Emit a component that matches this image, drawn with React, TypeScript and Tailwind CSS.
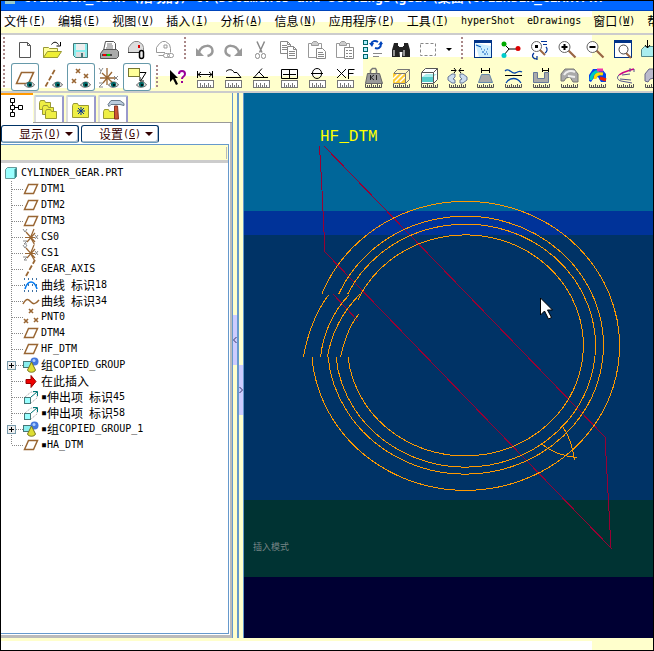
import type { ReactNode } from 'react';

const MONO = "font-['DejaVu_Sans_Mono','Liberation_Mono',monospace]";
const CJK = "font-['Noto_Sans_CJK_SC',sans-serif]";

/** Sets Chinese runs at 12px and half-width Latin runs at 10px (6px advance). */
function Mixed({ text }: { text: string }) {
  return (
    <span className={`inline-flex items-center whitespace-pre text-[10px] leading-4 ${MONO}`}>
      {text.split(/([\u4e00-\u9fff]+)/).map((run, i) =>
        i % 2 ? (
          <span key={i} className={`text-[12px] leading-4 ${CJK}`}>{run}</span>
        ) : (
          <span key={i}>{run}</span>
        ),
      )}
    </span>
  );
}

function KeyLabel({ text, hot }: { text: string; hot?: string }) {
  return (
    <span className="inline-flex items-center">
      <Mixed text={text} />
      {hot && (
        <span className={`text-[10px] leading-4 ${MONO}`}>
          (<u>{hot}</u>)
        </span>
      )}
    </span>
  );
}

/* ---------- toolbar drawings, each on a 28 x 28 field ---------- */

const Ruler = () => (
  <g stroke="#777" fill="#fff" strokeWidth="1">
    <rect x="6.5" y="17.5" width="16" height="7" />
    <path d="M9.5 20v4M11.5 22v2M13.5 20v4M15.5 22v2M17.5 20v4M19.5 22v2" />
  </g>
);
const Ticks = () => (
  <path d="M6.5 21v3.5h16V21M8.5 22v2M10.5 22v2M12.5 21v3M14.5 22v2M16.5 22v2M18.5 21v3M20.5 22v2" stroke="#555" strokeWidth="1" fill="none" />
);
const Eye = () => (
  <g>
    <path d="M13.500 22c3-4 8-4 10 0c-3 3-8 3-10 0z" fill="#ddd" stroke="#666" />
    <rect x="16" y="19" width="5" height="5" rx="2" fill="#006666" />
    <rect x="18" y="21" width="2" height="2" fill="#001818" />
  </g>
);
const Cross = ({ x, y, r = 2 }: { x: number; y: number; r?: number }) => (
  <path d={`M${x - r} ${y - r}l${2 * r} ${2 * r}M${x + r} ${y - r}l${-2 * r} ${2 * r}`} stroke="#996633" strokeWidth="1.6" fill="none" />
);
const Lens = ({ sign }: { sign?: string }) => (
  <g fill="none">
    <path d="M15.500 15.500l7 7" stroke="#996644" strokeWidth="2.200" />
    <circle cx="11.500" cy="12" r="5.500" fill="#fff" stroke="#666" />
    {sign && <path d={sign} stroke="#000" strokeWidth="2" />}
  </g>
);

type Tool = { name: string; art: ReactNode; on?: boolean };

const fileTools: Tool[] = [
  { name: 'New', art: <path d="M8.500 7.500h8l3 3v12h-11zM16.500 7.500v3h3" fill="#fff" stroke="#555" /> },
  {
    name: 'Open',
    art: (
      <g>
        <path d="M4.500 12.500h5l1 1h8v9h-14z" fill="#ffff99" stroke="#999933" />
        <path d="M4.500 22.500l4-6h14l-4 6z" fill="#eeee33" stroke="#999933" />
        <path d="M12.500 9.500c2-3 5-3 7 0M21.500 7v4h-4" fill="none" stroke="#000" />
      </g>
    ),
  },
  {
    name: 'Save',
    art: (
      <g>
        <path d="M6.500 8.500h14v14h-12l-2-2z" fill="#88eeee" stroke="#447777" />
        <rect x="9" y="9" width="9" height="6" fill="#eee" />
        <rect x="9" y="17" width="9" height="5" fill="#ddd" />
        <rect x="14" y="18" width="2" height="4" fill="#447777" />
      </g>
    ),
  },
  {
    name: 'Print',
    art: (
      <g>
        <path d="M8.500 15.500l2-9h8l2 2v7z" fill="#fff" stroke="#555" />
        <path d="M12 9h5M12 11h6M11 13h7" stroke="#777" />
        <path d="M5.500 18.500l3-4h13l2 2v5l-2 2h-16z" fill="#aaa" stroke="#555" />
        <rect x="7" y="19" width="10" height="2" fill="#444" />
        <rect x="8" y="19" width="3" height="2" fill="#e00" />
        <rect x="12" y="19" width="3" height="2" fill="#0c0" />
      </g>
    ),
  },
  {
    name: 'Send mail',
    art: (
      <g>
        <path d="M5.500 17.500v-5l3-4 3-2h4l4 3 1 3v5z" fill="#ddd" stroke="#888" />
        <path d="M5 17.500h12" stroke="#333" />
        <rect x="15" y="10" width="2" height="3" fill="#d00" />
        <rect x="16.500" y="15.500" width="4" height="8" rx="2" fill="#eee" stroke="#000" strokeWidth="1.500" />
      </g>
    ),
  },
  {
    name: 'Send link',
    art: (
      <g fill="none" stroke="#999">
        <path d="M14 17.500H5.500v-5l3-4 3-2h3l4 3 1 4v4M7.500 20.500h5M13 10h3v3h-3z" />
        <rect x="12.500" y="18.500" width="6" height="4" rx="2" />
        <rect x="16.500" y="18.500" width="6" height="4" rx="2" />
      </g>
    ),
  },
];

const clipboard = (
  <g fill="#fff" stroke="#999">
    <path d="M5.500 8.500h13v14h-13z" />
    <path d="M8.500 8.500l2-2h3l2 2v2h-7z" fill="#ccc" />
  </g>
);

const editTools: Tool[] = [
  {
    name: 'Undo',
    art: (
      <g>
        <path d="M8 17C11 9 22 9 21.500 16c0 3-3 4.500-5 5" fill="none" stroke="#999" strokeWidth="2.500" />
        <path d="M5 13v8h8z" fill="#999" />
      </g>
    ),
  },
  {
    name: 'Redo',
    art: (
      <g>
        <path d="M20 17C17 9 6 9 6.500 16c0 3 3 4.500 5 5" fill="none" stroke="#999" strokeWidth="2.500" />
        <path d="M23 13v8h-8z" fill="#999" />
      </g>
    ),
  },
  {
    name: 'Cut',
    art: (
      <g fill="none" stroke="#888">
        <path d="M10 6.500l5 11M17.500 6.500l-5 11" strokeWidth="1.500" />
        <rect x="8.500" y="18.500" width="4" height="5" rx="2" />
        <rect x="14.500" y="18.500" width="4" height="5" rx="2" />
      </g>
    ),
  },
  {
    name: 'Copy',
    art: (
      <g fill="#fff" stroke="#888">
        <path d="M5.500 6.500h7l3 3v9h-10zM12.500 6.500v3h3M7 10.500h5M7 12.500h5M7 14.500h5" />
        <path d="M12.500 11.500h6l3 3v9h-9zM18.500 11.500v3h3M14 16.500h6M14 18.500h6M14 20.500h6" />
      </g>
    ),
  },
  {
    name: 'Paste',
    art: (
      <g fill="#fff" stroke="#888">
        {clipboard}
        <path d="M13.500 13.500h6l3 3v7h-9zM15 17.500h5M15 19.500h6M15 21.500h6" />
      </g>
    ),
  },
  {
    name: 'Paste special',
    art: (
      <g fill="#fff" stroke="#888">
        {clipboard}
        <path d="M13.500 12.500h9v11h-9zM15 15.500h2M15 18.500h2M15 21.500h2M18 15.500h3M18 18.500h3M18 21.500h3" />
      </g>
    ),
  },
  {
    name: 'Regenerate',
    art: (
      <g fill="#aef" stroke="#066">
        <rect x="4.500" y="5.500" width="4" height="4" />
        <rect x="4.500" y="12.500" width="4" height="4" />
        <rect x="4.500" y="19.500" width="4" height="4" />
        <path d="M14 18.500h9M14 21.500h6" stroke="#888" />
        <path d="M12 9c1-3 4-4 7-2M22 9c0 4-3 5-6 4" fill="none" stroke="#0044bb" strokeWidth="2" />
        <path d="M10 8h5l-2 4zM19 10l5-1-2-3z" fill="#0044bb" stroke="none" />
      </g>
    ),
  },
  {
    name: 'Find',
    art: (
      <g fill="#222">
        <path d="M7 8h4v3h1l1 11H5V15zM17 8h4l2 7v7h-8l1-11h1z" />
        <rect x="12" y="12" width="4" height="5" />
        <path d="M7 15v6M17 15v6" stroke="#bbb" strokeWidth="1.500" />
      </g>
    ),
  },
  { name: 'Select box', art: <rect x="5.500" y="8.500" width="15" height="12" fill="none" stroke="#888" strokeDasharray="3 2" /> },
];

const windowFrame = (
  <g>
    <rect x="5.500" y="5.500" width="17" height="17" fill="#fff" stroke="#003388" />
    <rect x="5" y="5" width="18" height="3" fill="#003388" />
  </g>
);

const viewTools: Tool[] = [
  {
    name: 'Repaint',
    art: (
      <g>
        {windowFrame}
        <path d="M6 8l16 3v11H10z" fill="#cceeff" />
        <path d="M12 12l-5-2M12 14h1M15 15h1M18 14h1M13 17h2M17 17h1M15 19h2M18 19h1" stroke="#0055bb" strokeWidth="1.200" />
      </g>
    ),
  },
  {
    name: 'Orient',
    art: (
      <g>
        <path d="M7 9l5 5-5 6M12 14h7" stroke="#000" fill="none" />
        <circle cx="7" cy="9" r="2.500" fill="#0a0" />
        <circle cx="21" cy="13.500" r="2.500" fill="#d00" />
        <circle cx="7" cy="20.500" r="2.500" fill="#0cc" />
      </g>
    ),
  },
  {
    name: 'Refit angle',
    art: (
      <g>
        <circle cx="11.500" cy="11.500" r="5" fill="#fff" stroke="#666" />
        <rect x="10" y="10" width="3" height="3" fill="#000" />
        <path d="M15 15l5 5" stroke="#996644" strokeWidth="2" />
        <path d="M16 6.500h6M18 9.500h4M21 12c2 2 1 5-1 6M9 18c-3 3-1 6 3 6M12 21v4" fill="none" stroke="#003399" strokeWidth="1.200" />
      </g>
    ),
  },
  { name: 'Zoom in', art: <Lens sign="M8.500 12h6M11.500 9v6" /> },
  { name: 'Zoom out', art: <Lens sign="M8.500 12h6" /> },
  {
    name: 'Refit',
    art: (
      <g>
        {windowFrame}
        <path d="M17 18l5 5" stroke="#996644" strokeWidth="2" />
        <circle cx="14.500" cy="14.500" r="4.500" fill="#fff" stroke="#444" />
      </g>
    ),
  },
  {
    name: 'Saved views',
    art: (
      <g>
        <path d="M4.500 14.500l3-3h14v10h-17z" fill="#aee" stroke="#588" />
        <path d="M10.500 5v8M8 10l2.500 3 2.500-3" stroke="#000" fill="none" />
      </g>
    ),
  },
];

const datumTools: Tool[] = [
  {
    name: 'Datum planes',
    on: true,
    art: (
      <g>
        <path d="M5.500 20.500l5-11h12l-5 11z" fill="none" stroke="#996633" strokeWidth="1.600" />
        <Eye />
      </g>
    ),
  },
  {
    name: 'Datum axes',
    art: (
      <g>
        <path d="M6.500 23.500l10-18" stroke="#996633" strokeWidth="1.800" strokeDasharray="5 2" />
        <Eye />
      </g>
    ),
  },
  {
    name: 'Datum points',
    on: true,
    art: (
      <g>
        <Cross x={11} y={8} />
        <Cross x={19} y={13} />
        <Cross x={7} y={18} />
        <Eye />
      </g>
    ),
  },
  {
    name: 'Coordinate systems',
    art: (
      <g>
        <path d="M12 5v17M5 15h15M7 10l11 10M17 9L8 20" stroke="#996633" strokeWidth="1.300" />
        <path d="M4 5l2 3 2-3M6 8l-1 3M19 13l4 4M23 13l-4 4M4 20h4l-4 4h4" stroke="#888" fill="none" />
        <Eye />
      </g>
    ),
  },
  {
    name: 'Annotations',
    on: true,
    art: (
      <g>
        <rect x="5.500" y="5.500" width="11" height="8" fill="#ffff99" stroke="#777733" />
        <path d="M17 9.500h6l-5 8M17 14v4h4" stroke="#000" fill="none" />
        <Eye />
      </g>
    ),
  },
];

const measureTools: Tool[] = [
  {
    name: 'Context help',
    art: (
      <g>
        <path d="M7 7l8 8h-3l3 6-2 1-3-6-3 3z" fill="#000" />
        <path d="M16 11c0-4 6-4 6 0c0 3-3 2-3 5" fill="none" stroke="#990099" strokeWidth="2" />
        <rect x="18" y="18" width="2" height="2" fill="#990099" />
      </g>
    ),
  },
  { name: 'Distance', art: <g><Ruler /><path d="M6.500 8v7M21.500 8v7M7 11.500h14M10 9l-3 2.500 3 2.500M18 9l3 2.500-3 2.500" stroke="#000" fill="none" /></g> },
  { name: 'Length', art: <g><Ruler /><path d="M7 14.500h15M7 8.500c3-3 7-2 8 1h3l4 5" stroke="#000" fill="none" /></g> },
  { name: 'Angle', art: <g><Ruler /><path d="M6 14.500h15M7 14.500l8-9M12 9l5 5" stroke="#000" fill="none" /></g> },
  { name: 'Area', art: <g><Ruler /><path d="M6.500 6.500h16v9h-16zM14.500 6.500v9M8 11.500h13" stroke="#000" fill="none" /></g> },
  { name: 'Diameter', art: <g><Ruler /><rect x="9.500" y="5.500" width="9" height="10" rx="4.500" fill="none" stroke="#000" /><path d="M8 10.500h12" stroke="#000" /></g> },
  { name: 'Transform', art: <g><Ruler /><path d="M6 6l9 9M15 6l-9 9M17.500 16V6.500h6M17.500 10.500h5" stroke="#000" fill="none" /></g> },
  {
    name: 'Mass',
    art: (
      <g>
        <path d="M8.500 10.500h12l3 10h-17z" fill="#999" stroke="#666" />
        <path d="M11.500 10.500v-3l2-2h3l1 2v3" fill="none" stroke="#777" strokeWidth="1.500" />
        <path d="M11.500 12v5M15 12l-3 2.500 3 2.500M17.500 12v5" stroke="#222" fill="none" />
        <Ticks />
      </g>
    ),
  },
  {
    name: 'Cross section',
    art: (
      <g>
        <path d="M6.500 10.500l4-4h12v10l-4 4h-12z" fill="#fff7c0" stroke="#777" />
        <rect x="6" y="10" width="12" height="10" fill="#ffcc33" />
        <path d="M6 16l6-6M8 19l9-9M13 19l5-5" stroke="#fff" strokeWidth="1.500" />
        <path d="M18.500 20V10.500H7M18.500 10.500l4-4" stroke="#777" fill="none" />
        <Ticks />
      </g>
    ),
  },
  {
    name: 'Pair clearance',
    art: (
      <g>
        <path d="M6.500 9.500l4-4h12v11l-4 4h-12z" fill="#fff" stroke="#555" />
        <path d="M7 14h11v5H7z" fill="#55cccc" />
        <path d="M7 14l4-3h11l-4 3z" fill="#aaeeee" />
        <path d="M18.500 20V9.500H7M18.500 9.500l4-4" stroke="#555" fill="none" />
        <Ticks />
      </g>
    ),
  },
  {
    name: 'Global interference',
    art: (
      <g>
        <path d="M12 11H9l-4 3v3l4 3h3v-3l-2-1 2-2zM17 11h3l4 3v3l-4 3h-3v-3l2-1-2-2z" fill="#ccddee" stroke="#667799" />
        <path d="M8 7.500h5M16 7.500h5M11 5l2 2.500-2 2.500M18 5l-2 2.500 2 2.500" stroke="#000" fill="none" />
        <Ticks />
      </g>
    ),
  },
  {
    name: 'Draft check',
    art: <g><path d="M10.500 11.500h8l3 8h-14z" fill="#aaa" stroke="#6688aa" /><path d="M10.500 5v5M18.500 5v5M11 7.500h7" stroke="#000" /><Ticks /></g>,
  },
  {
    name: 'Curvature',
    art: <g fill="none" stroke="#0044aa" strokeWidth="1.300"><path d="M6 8c4-4 6 3 10 2s4-3 7-1" /><path d="M7 20c4-6 11-6 15 0" /><path d="M6 12.500h17" stroke="#000" strokeWidth="1" /><Ticks /></g>,
  },
  {
    name: 'Thickness',
    art: <g><path d="M6.500 9.500h4v6h7v-6h4v10h-15z" fill="#aaa" stroke="#667799" /><path d="M15.500 5v4M21.500 5v4M16 7.500h6" stroke="#000" /><Ticks /></g>,
  },
  {
    name: 'Shaded curvature',
    art: <g><path d="M6 18v-7l4-5h9l4 5v8h-5l-3-5-4 1-2 3z" fill="#aaa" stroke="#777" /><path d="M9 12c2-4 7-5 11-3M13 13l7 1" stroke="#eee" fill="none" strokeWidth="2" /><Ticks /></g>,
  },
  {
    name: 'Colour curvature',
    art: (
      <g fill="none" strokeWidth="3">
        <path d="M6 18v-6l4-6h9l4 5v8h-5l-3-5-5 2-2 3z" fill="#0044ee" />
        <path d="M8 17c0-5 3-8 8-9" stroke="#00ccbb" />
        <path d="M12 16c0-4 3-6 8-5" stroke="#ffdd00" />
        <path d="M17 15l6 2" stroke="#ee2200" />
        <path d="M14 7h6" stroke="#ee33aa" />
        <Ticks />
      </g>
    ),
  },
  {
    name: 'Sections',
    art: <g fill="none"><path d="M23 6c-6 2-9 2-15 6" stroke="#cc0088" strokeWidth="1.500" /><path d="M8 12c-3 3-1 5 2 6l11 2M9 16l11 1M11 12l8-1M19 5v4M23 6v3" stroke="#555588" /><Ticks /></g>,
  },
  { name: 'Reflection', art: <g><path d="M6 18v-7l4-5h9l4 5v8h-5l-3-4-4 1-2 3z" fill="#bbbbcc" stroke="#666688" /><Ticks /></g> },
];

function ToolButton({ tool }: { tool: Tool }) {
  return (
    <button
      type="button"
      aria-label={tool.name}
      className={`size-7 shrink-0 ${tool.on ? 'rounded-[3px] bg-white shadow-[inset_0_0_0_1px_#6699aa]' : ''}`}
    >
      <svg viewBox="0 0 28 28" className="size-7">{tool.art}</svg>
    </button>
  );
}

function Grip() {
  return <span className="h-6 w-[2px] bg-[repeating-linear-gradient(#aa8888_0_2px,transparent_2px_4px)]" />;
}

/* ---------- model tree ---------- */

const icons: Record<string, ReactNode> = {
  plane: <path d="M1.500 12.500l4-9h9l-4 9z" fill="none" stroke="#996633" strokeWidth="1.500" />,
  csys: (
    <g fill="none">
      <path d="M7.500 8.500L11 0M7.500 8.500l4 7M2 8.500h10M3 3l9 10M12 4l-8 9" stroke="#996633" strokeWidth="1.200" />
      <path d="M0 0l2 3 2-3M12 6l3 4M15 6l-3 4M0 12h4l-3 3h3" stroke="#888" />
    </g>
  ),
  axis: <path d="M3 15l9-16" stroke="#996633" strokeWidth="1.800" strokeDasharray="5 2" />,
  sketch: (
    <g fill="none">
      <path d="M1 2h14M1 8h14M1 14h14" stroke="#004488" strokeDasharray="1 3" strokeWidth="1.500" />
      <path d="M2 12c1-3 2-7 6-7s5 4 6 7" stroke="#0077ee" strokeWidth="1.500" />
    </g>
  ),
  curve: <path d="M0 11c4-7 6-4 8-2s4 3 8-2" fill="none" stroke="#996633" strokeWidth="1.500" />,
  point: <g><Cross x={8} y={2} /><Cross x={3} y={12} /><Cross x={13} y={11} /></g>,
  group: (
    <g>
      <rect x=".5" y="4.500" width="8" height="6" fill="#88eeee" stroke="#447777" />
      <circle cx="11.500" cy="4.500" r="4" fill="#4477dd" />
      <circle cx="11" cy="3.500" r="1.500" fill="#aaccff" />
      <path d="M8.500 5l4 8c-1 3-7 3-8 0z" fill="#dddd33" stroke="#777722" />
    </g>
  ),
  insert: <path d="M3 6.500h5v-4l5 6-5 6v-4H3z" fill="#ee0000" stroke="#990000" />,
  extrude: (
    <g fill="none">
      <path d="M2 8l6-5h6v6l-6 5" stroke="#999" strokeDasharray="1 1" />
      <path d="M8 8l6-5M10 2.500h4.500V7" stroke="#007777" />
      <rect x="1.500" y="8.500" width="6" height="6" fill="#99ffff" stroke="#447777" />
    </g>
  ),
};

const nodes: { icon: string; text: string; expandable?: boolean }[] = [
  { icon: 'plane', text: 'DTM1' },
  { icon: 'plane', text: 'DTM2' },
  { icon: 'plane', text: 'DTM3' },
  { icon: 'csys', text: 'CS0' },
  { icon: 'csys', text: 'CS1' },
  { icon: 'axis', text: 'GEAR_AXIS' },
  { icon: 'sketch', text: '曲线 标识18' },
  { icon: 'curve', text: '曲线 标识34' },
  { icon: 'point', text: 'PNT0' },
  { icon: 'plane', text: 'DTM4' },
  { icon: 'plane', text: 'HF_DTM' },
  { icon: 'group', text: '组COPIED_GROUP', expandable: true },
  { icon: 'insert', text: '在此插入' },
  { icon: 'extrude', text: '▪伸出项 标识45' },
  { icon: 'extrude', text: '▪伸出项 标识58' },
  { icon: 'group', text: '▪组COPIED_GROUP_1', expandable: true },
  { icon: 'plane', text: '▪HA_DTM' },
];

function ModelTree() {
  return (
    <div className="flex-1 bg-white pt-[2px] text-black">
      <div className="flex h-4 items-center pl-[3px]">
        <svg viewBox="0 0 14 14" className="mr-[3px] size-[14px]">
          <path d="M1.500 3.500l2-2h9v9l-2 2h-9z" fill="#99ffff" stroke="#669999" />
          <path d="M10.500 13V3.500l2-2v9z" fill="#338888" />
        </svg>
        <Mixed text="CYLINDER_GEAR.PRT" />
      </div>
      <ul>
        {nodes.map((node, i) => (
          <li key={i} className="flex h-4 items-center">
            <svg viewBox="0 0 22 16" className="h-4 w-[22px] shrink-0">
              <path d={i === nodes.length - 1 ? 'M10.500 0v8' : 'M10.500 0v16'} stroke="#888" strokeDasharray="1 1" />
              <path d="M11 8.500h11" stroke="#888" strokeDasharray="1 1" />
              {node.expandable && (
                <g>
                  <rect x="6.500" y="4.500" width="8" height="8" fill="#eee" stroke="#7799aa" />
                  <path d="M8 8.500h5M10.500 6v5" stroke="#000" />
                </g>
              )}
            </svg>
            <svg viewBox="0 0 16 16" className="mr-[2px] size-4 shrink-0 overflow-visible">{icons[node.icon]}</svg>
            <Mixed text={node.text} />
          </li>
        ))}
      </ul>
    </div>
  );
}

const folder = (x: number, y: number, w: number, h: number) => (
  <path d={`M${x} ${y + 2}l1-2h4l1 2h${w - 6}v${h - 2}h${-w}z`} fill="#eeee44" stroke="#999933" />
);

const tabs: { name: string; art: ReactNode }[] = [
  {
    name: 'Folder browser',
    art: <g>{folder(4.5, 3.5, 11, 9)}{folder(7.5, 8.5, 11, 9)}{folder(10.5, 12.5, 11, 9)}</g>,
  },
  {
    name: 'Favorites',
    art: <g>{folder(5.5, 6.5, 16, 14)}<path d="M14 10v8M10 14h8M11 11l6 6M17 11l-6 6" stroke="#003399" /></g>,
  },
  {
    name: 'Connections',
    art: (
      <g>
        {folder(4.5, 12.5, 12, 9)}
        <path d="M15.500 9h3l1 13h-4z" fill="#cc5533" stroke="#883322" />
        <path d="M9 7.500l3-4h9l4 3v2l-4-1h-9l-2 2z" fill="#bbccdd" stroke="#667788" />
      </g>
    ),
  },
];

function DropButton({ text, hot }: { text: string; hot: string }) {
  return (
    <button
      type="button"
      className="flex h-[18px] w-[78px] items-center justify-center gap-1 rounded-[3px] border border-[#003366] border-b-[#6699bb] bg-white pl-3 text-[#330000] shadow-[inset_-1px_-1px_0_#aabbcc]"
    >
      <KeyLabel text={text} hot={hot} />
      <svg viewBox="0 0 8 4" className="h-1 w-2"><path d="M0 0h8L4 4z" fill="#330000" /></svg>
    </button>
  );
}

function Navigator() {
  return (
    <aside className="flex w-[231px] shrink-0 flex-col bg-[#ffffcc]">
      <div className="flex h-[30px] items-end">
        <button type="button" aria-label="Model tree" className="h-full w-8 border-t-2 border-[#ff9900] bg-white">
          <svg viewBox="0 0 32 28" className="h-7 w-8">
            <path d="M11.500 5v14M12 12.500h7" stroke="#000" />
            <path d="M9.500 3.500h4v4h-4zM9.500 10.500h4v4h-4zM9.500 17.500h4v4h-4zM17.500 10.500h4v4h-4z" fill="#fff" stroke="#000" />
          </svg>
        </button>
        <div className="flex flex-1 gap-[2px] border-b border-[#999999] pl-px">
          {tabs.map((tab) => (
            <button
              key={tab.name}
              type="button"
              aria-label={tab.name}
              className="h-[27px] w-[30px] rounded-t-[2px] border-2 border-b-0 border-l-[#dddddd] border-r-[#9999cc] border-t-[#bbccdd] bg-white"
            >
              <svg viewBox="0 0 26 26" className="-ml-px size-[26px]">{tab.art}</svg>
            </button>
          ))}
        </div>
      </div>
      <div className="flex flex-1 flex-col border-b-[3px] border-r-2 border-[#bbbbbb] bg-white">
        <div className="flex gap-[2px] pb-px pt-[2px]">
          <DropButton text="显示" hot="O" />
          <DropButton text="设置" hot="G" />
        </div>
        <div className="mb-px mr-px flex flex-1 flex-col border-b border-r border-t border-[#6699cc]">
          <div className="flex h-[18px] items-center justify-end border-b-[3px] border-[#cccccc] bg-[#ffffcc] pr-px">
            <span className="h-3 w-px bg-[#bbbbbb]" />
          </div>
          <ModelTree />
        </div>
      </div>
    </aside>
  );
}

function Sash({ label, side }: { label: string; side: 'left' | 'right' }) {
  return (
    <div className="w-[6px] shrink-0 border-x border-[#6699cc] bg-[#ffffcc]">
      <button
        type="button"
        aria-label={label}
        className={`flex h-[50px] w-full items-center justify-center bg-[#ccccff] ${side === 'left' ? 'mt-[222px]' : 'mt-[272px]'}`}
      >
        <svg viewBox="0 0 4 6" className="h-[6px] w-1">
          <path d={side === 'left' ? 'M3.500 0l-3 3 3 3' : 'M.5 0l3 3-3 3'} fill="none" stroke="#333366" />
        </svg>
      </button>
    </div>
  );
}

/* ---------- graphics window ---------- */

function Viewport() {
  return (
    <main className="relative flex min-w-0 flex-1 flex-col overflow-hidden">
      <div className="h-[118px] bg-[#006699]" />
      <div className="h-6 bg-[#003399]" />
      <div className="h-[265px] bg-[#003366]" />
      <div className="h-[77px] bg-[#003333]" />
      <div className="min-h-[61px] flex-1 bg-[#000033]" />
      <svg viewBox="244 93 409 545" className="absolute left-0 top-0 h-[545px] w-[409px]">
        <g fill="none" stroke="#990033" shapeRendering="crispEdges">
          <path d="M319.500 146l2 34 3.500 72L611 548l-6-111L324 146" />
          <path d="M333 294l25 27" />
        </g>
        <g fill="none" stroke="#ff9900" shapeRendering="crispEdges">
          <path d="M322 293.500A154 144.500 0 1 1 312 357" />
          <path d="M338.500 294.500A138 129 0 1 1 328 357" />
          <path d="M347.500 294.500A130 121.500 0 1 1 336 357" />
          <path d="M358 299.500A118 110.500 0 1 1 348 357" />
          <path d="M328.500 295Q310 320 303.500 357M349 295Q325 320 320.500 357M360 294Q333 322 327.500 357M359 314Q347 328 340.500 357" />
          <path d="M562 425.500q10 14 12.500 35M541 443.500q14 12 36 14" />
        </g>
        <text x="320" y="141" fill="#ffff00" className="font-['Liberation_Mono',monospace] text-[16px]">HF_DTM</text>
        <text x="253" y="550" fill="#778585" className="font-['Noto_Sans_CJK_SC',sans-serif] text-[9px]">插入模式</text>
        <path d="M540.500 298v17l4-4 4 8 3-1.500-4-7.500h5z" fill="#fff" stroke="#000" />
      </svg>
    </main>
  );
}

const menus: [string, string?][] = [
  ['文件', 'F'],
  ['编辑', 'E'],
  ['视图', 'V'],
  ['插入', 'I'],
  ['分析', 'A'],
  ['信息', 'N'],
  ['应用程序', 'P'],
  ['工具', 'T'],
  ['hyperShot'],
  ['eDrawings'],
  ['窗口', 'W'],
  ['帮助', 'H'],
];

export default function App() {
  return (
    <div className="flex min-h-screen flex-col overflow-hidden border border-black bg-[#ffffcc]">
      <header className="flex h-[10px] shrink-0 items-end gap-2 overflow-hidden border-b border-[#0044bb] bg-[#0066ff] pb-[6px] pl-1 text-white">
        <span className="size-[10px] shrink-0 bg-[#99cccc]" />
        <h1 className={`whitespace-pre text-[13px] font-bold leading-3 ${MONO}`}>
          {'CYLINDER_GEAR (活动的) C:\\Documents and Settings\\gear\\桌面\\CYLINDER_GEAR.PRT'}
        </h1>
      </header>

      <nav className="flex h-[22px] shrink-0 gap-3 overflow-hidden bg-[#ffffcc] bg-[linear-gradient(#fff,#fff),linear-gradient(#fff,#fff),linear-gradient(#fff,#fff)] bg-[length:175px_16px,435px_11px,591px_6px] bg-no-repeat pl-[3px] text-black">
        {menus.map(([text, hot]) => (
          <button key={text} type="button" className="flex h-5 shrink-0 items-center">
            <KeyLabel text={text} hot={hot} />
          </button>
        ))}
      </nav>

      <div className="h-[60px] shrink-0 overflow-hidden border-y-2 border-[#cccccc] bg-[#ffffcc] bg-[linear-gradient(#fff,#fff),linear-gradient(#fff,#fff),linear-gradient(#fff,#fff)] bg-[length:154px_53px,362px_41px,591px_22px] bg-no-repeat">
        <div role="toolbar" aria-label="Standard" className="flex h-7 items-center">
          <div className="flex w-[10px] shrink-0 pl-[2px]"><Grip /></div>
          {fileTools.map((t) => <ToolButton key={t.name} tool={t} />)}
          <div className="flex w-3 shrink-0 justify-center"><Grip /></div>
          {editTools.map((t) => <ToolButton key={t.name} tool={t} />)}
          <button type="button" aria-label="Selection options" className="flex w-3 shrink-0 justify-center">
            <svg viewBox="0 0 6 3" className="h-[3px] w-[6px]"><path d="M0 0h6L3 3z" /></svg>
          </button>
          <div className="flex w-[14px] shrink-0 justify-center"><Grip /></div>
          {viewTools.map((t) => <ToolButton key={t.name} tool={t} />)}
        </div>
        <div role="toolbar" aria-label="Datum and analysis" className="flex h-7 items-center">
          <div className="flex w-[10px] shrink-0 pl-[2px]"><Grip /></div>
          {datumTools.map((t) => <ToolButton key={t.name} tool={t} />)}
          <div className="flex w-3 shrink-0 justify-center"><Grip /></div>
          {measureTools.map((t) => <ToolButton key={t.name} tool={t} />)}
        </div>
      </div>

      <div className="flex min-h-[545px] flex-1">
        <Navigator />
        <Sash label="Collapse navigator" side="left" />
        <Sash label="Expand browser" side="right" />
        <Viewport />
      </div>

      <footer className="h-3 shrink-0 pr-[61px] pt-[3px]">
        <div className="h-full bg-white" />
      </footer>
    </div>
  );
}
